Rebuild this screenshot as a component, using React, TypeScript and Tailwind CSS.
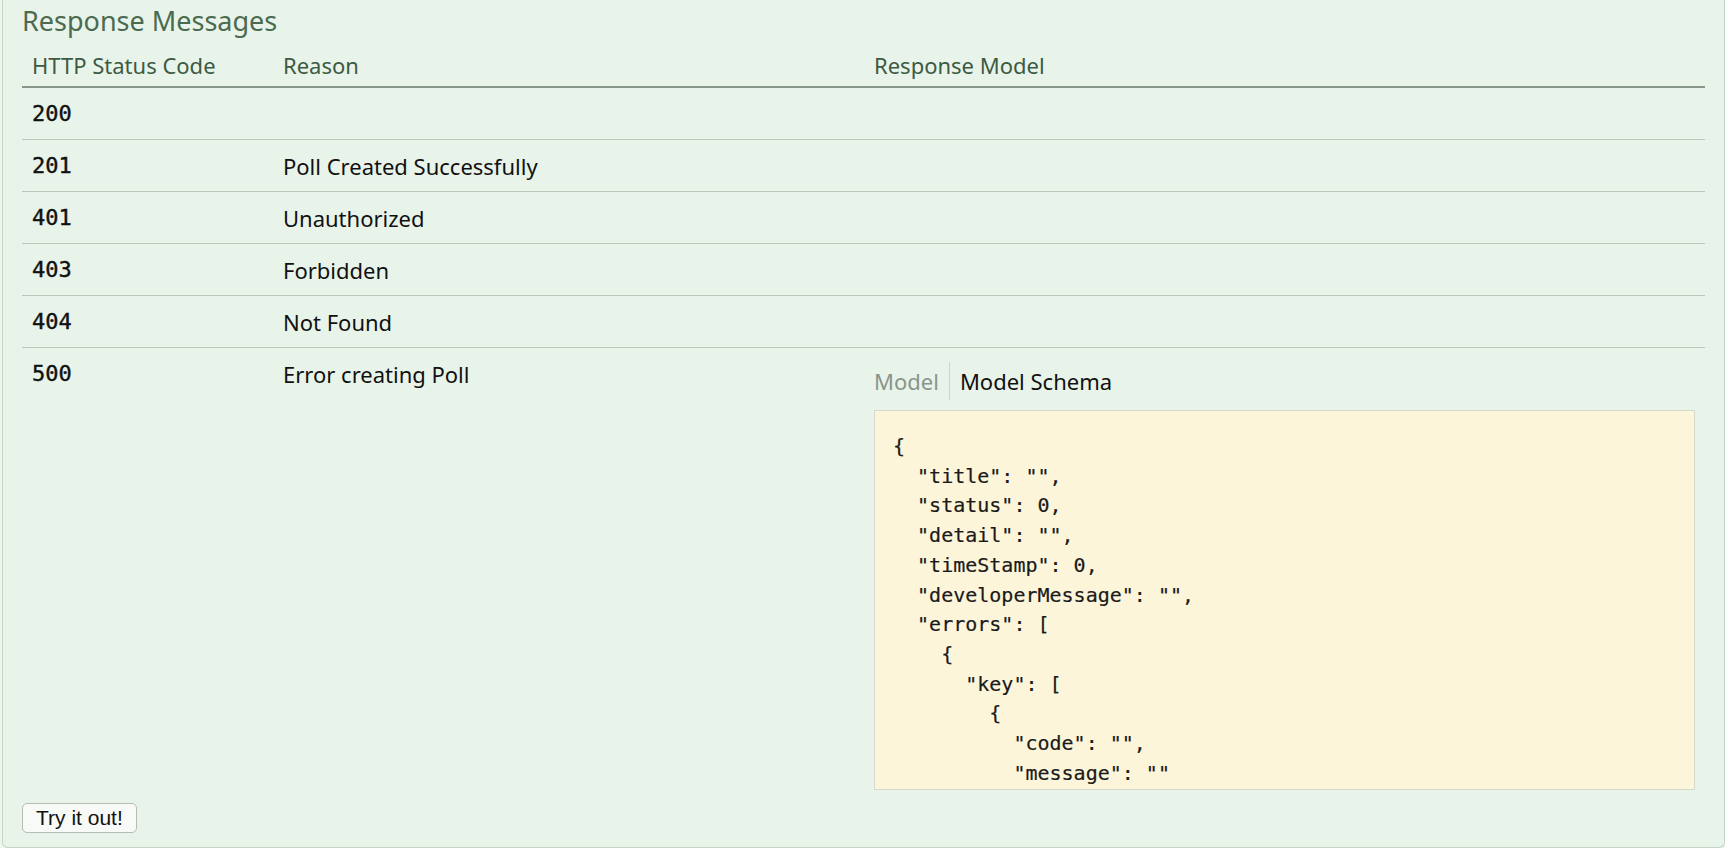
import React from "react";

const rows = [
  { code: "200", reason: "" },
  { code: "201", reason: "Poll Created Successfully" },
  { code: "401", reason: "Unauthorized" },
  { code: "403", reason: "Forbidden" },
  { code: "404", reason: "Not Found" },
];

const json = `{
  "title": "",
  "status": 0,
  "detail": "",
  "timeStamp": 0,
  "developerMessage": "",
  "errors": [
    {
      "key": [
        {
          "code": "",
          "message": ""
        }
      ],
      "value": ""
    }
  ]
}`;

export default function App() {
  return (
    <div className="w-[1725px] h-[848px] bg-[#eef6ef] overflow-hidden font-['Noto_Sans',sans-serif]">
      <div className="ml-[2px] h-[848px] border-x border-b border-[#c3d5c5] rounded-b-[6px] bg-[#e8f4ea] px-[19px] flex flex-col">
        <h4 className="pt-[3px] text-[27px] leading-[36px] text-[#4b6a50]">Response Messages</h4>

        <div className="mt-[11px] grid grid-cols-[251px_591px_1fr] border-b-2 border-[#86978a] pb-[6px] text-[22px] leading-[30px] text-[#3d5a43]">
          <div className="px-[10px]">HTTP Status Code</div>
          <div className="px-[10px]">Reason</div>
          <div className="px-[10px]">Response Model</div>
        </div>

        {rows.map((r) => (
          <div
            key={r.code}
            className="grid grid-cols-[251px_591px_1fr] border-b border-[#b9c8bb] pt-[11px] pb-[10px] leading-[30px]"
          >
            <div className="px-[10px] font-['DejaVu_Sans_Mono',monospace] text-[22px] text-[#111] [-webkit-text-stroke:0.4px_#111]">{r.code}</div>
            <div className="px-[10px] text-[22px] text-[#111]">{r.reason}</div>
            <div className="px-[10px]"></div>
          </div>
        ))}

        <div className="grid grid-cols-[251px_591px_1fr] pt-[11px] pb-[10px] leading-[30px]">
          <div className="px-[10px] font-['DejaVu_Sans_Mono',monospace] text-[22px] text-[#111] [-webkit-text-stroke:0.4px_#111]">500</div>
          <div className="px-[10px] text-[22px] text-[#111]">Error creating Poll</div>
          <div className="px-[10px] flex flex-col">
            <div className="flex h-[41px] pt-[2px] items-center text-[22px] leading-[38px]">
              <span className="pr-[10px] border-r border-[#c9d6ca] text-[#8a948b]">Model</span>
              <span className="pl-[10px] text-[#111]">Model Schema</span>
            </div>
            <div className="mt-[10px] h-[380px] overflow-hidden border border-[#d4d9c9] bg-[#fcf5d9] pt-[21px] pl-[18px]">
              <pre className="m-0 whitespace-pre font-['DejaVu_Sans_Mono',monospace] text-[20px] leading-[29.7px] text-[#1a1a1a] [-webkit-text-stroke:0.2px_#1a1a1a]">{json}</pre>
            </div>
          </div>
        </div>

        <div className="mt-[3px] flex">
          <button className="h-[30px] rounded-[5px] border border-[#b5bdb5] bg-[#f7faf7] px-[13px] font-['Liberation_Sans',Arial,sans-serif] text-[21px] leading-[28px] text-[#111]">
            Try it out!
          </button>
        </div>
      </div>
    </div>
  );
}
